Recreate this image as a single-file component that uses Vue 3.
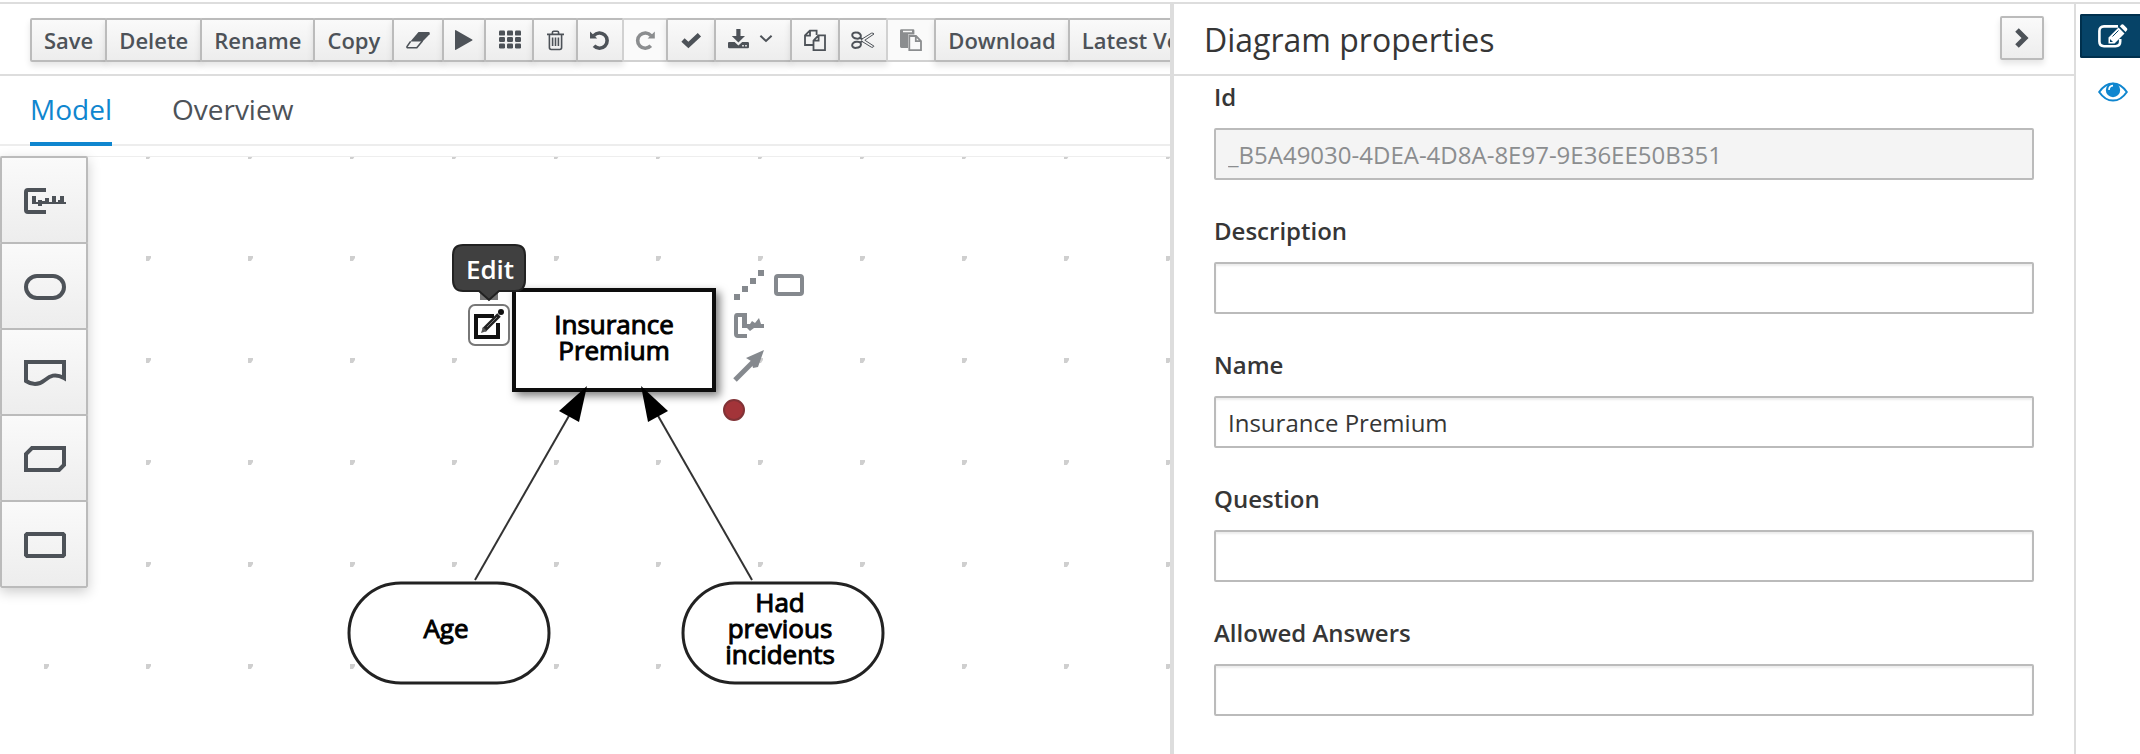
<script setup>
import { ref } from 'vue'

const tools = [
  { label: 'Save' },
  { label: 'Delete' },
  { label: 'Rename' },
  { label: 'Copy' },
  { name: 'Clear', width: 24, solid: 'M12.5 4H22.8Q24.6 4.3 23.6 6.2L16.6 13.6H4.4Z', line: 'M4.6 13.4L1 18.6Q.6 19.8 2 19.8H10.8L16.4 13', weight: 1.6 },
  { name: 'Run', width: 16, solid: 'M-1 2.6Q-.8 1.8 0 2.3L16.2 11.4Q17 12 16.2 12.6L0 21.7Q-.8 22.2 -1 21.4Z' },
  { name: 'Grid', width: 22, cells: true },
  { name: 'Remove', width: 18, line: 'M1 6.4H18M6.4 6V4.6Q6.4 3.2 7.8 3.2H11.2Q12.6 3.2 12.6 4.6V6M3.4 7V19.6Q3.4 21.5 5.2 21.5H13.8Q15.6 21.5 15.6 19.6V7M6.6 9.6V18M9.5 9.6V18M12.4 9.6V18', weight: 1.6 },
  { name: 'Undo', width: 20, solid: 'M0 3.4V10.6H7.2Z', line: 'M3.8 7.6A7.6 7.6 0 1 1 4 17.8', weight: 3.6 },
  { name: 'Redo', width: 18, disabled: true, solid: 'M18.8 3.4V10.6H11.6Z', line: 'M15 7.6A7.6 7.6 0 1 0 14.8 17.8', weight: 3.6 },
  { name: 'Validate', width: 22, line: 'M3 12L8.4 17L19.4 6.8', weight: 4.8 },
  { name: 'Export', width: 50, solid: 'M8.3 1H12.5V8H17L10.4 14.6L3.8 8H8.3ZM1 14H6.6L10.4 17.6L14.2 14H19.8Q21 14 21 15.2V19Q21 20.2 19.8 20.2H1.2Q0 20.2 0 19V15.2Q0 14 1 14ZM14.2 17V18.6H15.8V17ZM17.2 17V18.6H18.8V17Z', line: 'M32.4 7.8L38 13L43.6 7.8', weight: 2 },
  { name: 'Copy selection', width: 22, line: 'M8.6 17H1V7.4L5.8 2.6H12.6V7M6 2.8V7.6H1M9.5 12.6L14.4 7.4H21V22.2H9.5ZM14.6 7.6V12.6H9.6', weight: 1.8 },
  { name: 'Cut selection', width: 22, line: 'M4.6 4.6A3.8 3 15 1 1 4.5 10.6A3.8 3 15 1 1 4.6 4.6ZM4.6 13.8A3.8 3 -15 1 1 4.5 19.8A3.8 3 -15 1 1 4.6 13.8ZM7.6 9.4L10.4 11.4M7.6 15L10.4 13', weight: 2, thin: 'M10 11L19.4 5.2Q21.4 4.7 22 6L12.8 12.2L22 18.2Q21.4 19.7 19.4 19.2L10 13.4' },
  { name: 'Paste selection', width: 22, disabled: true, solid: 'M1.4 1.3H13.2Q14.4 1.3 14.4 2.6V6.6H8V20H1.4Q0 20 0 18.6V2.6Q0 1.3 1.4 1.3ZM3 2.8V4.2H12V2.8Z', line: 'M9.3 8H16L21 13V22.2H9.3ZM15.8 8.2V13.2H21', weight: 1.8 },
  { label: 'Download' },
  { label: 'Latest Version' },
]

const shapes = [
  { name: 'Text annotation', line: 'M22 2H4Q2 2 2 4V22Q2 24 4 24H22', solid: 'M8 8H12V14H14V12H18V13H21V10H25V14H28V8H32V14H34V12H36V8H40V14H42V16H18V18H14V16H8Z' },
  { name: 'Input data', line: 'M13 2H29A11 11 0 0 1 29 24H13A11 11 0 0 1 13 2Z' },
  { name: 'Knowledge source', line: 'M2 2H40V18C31 13 26 16 21 20C15 25 8 25 2 21Z' },
  { name: 'Business knowledge model', line: 'M8 2H40V19L35 24H2V8Z' },
  { name: 'Decision', line: 'M3 2H39L40 3V23L39 24H3L2 23V3Z' },
]

const fields = ref([
  { id: 'node-id', label: 'Id', value: '_B5A49030-4DEA-4D8A-8E97-9E36EE50B351', disabled: true },
  { id: 'description', label: 'Description', value: '' },
  { id: 'name', label: 'Name', value: 'Insurance Premium' },
  { id: 'question', label: 'Question', value: '' },
  { id: 'answers', label: 'Allowed Answers', value: '' },
])
</script>

<template>
  <div class="page">
    <main class="editor">
      <header class="bar toolbar">
        <button v-for="t in tools" :key="t.label || t.name" type="button" class="btn tool" :disabled="t.disabled" :aria-label="t.name">
          <template v-if="t.label">{{ t.label }}</template>
          <svg v-else class="icon" :width="t.width" height="24" aria-hidden="true">
            <g v-if="t.cells" fill="currentColor">
              <template v-for="row in 3" :key="row">
                <rect v-for="col in 3" :key="col" :x="col * 8 - 7" :y="row * 6.4 - 3.8" width="6" height="5" rx="1.2" />
              </template>
            </g>
            <path v-if="t.solid" :d="t.solid" fill="currentColor" fill-rule="evenodd" />
            <path v-if="t.line" :d="t.line" fill="none" stroke="currentColor" :stroke-width="t.weight" />
            <path v-if="t.thin" :d="t.thin" fill="none" stroke="currentColor" stroke-width="1" />
          </svg>
        </button>
      </header>

      <nav class="tabs">
        <a href="#model" class="tab active">Model</a>
        <a href="#overview" class="tab">Overview</a>
      </nav>

      <section class="canvas">
        <svg class="diagram" width="100%" height="100%" role="img" aria-label="Decision diagram">
          <defs>
            <pattern id="dots" x="44" y="-3" width="102" height="102" patternUnits="userSpaceOnUse">
              <path d="M0 1H5V3L3 6H0Z" fill="#cfcfcf" />
            </pattern>
            <filter id="shade" x="-10%" y="-10%" width="125%" height="130%">
              <feDropShadow dx="4" dy="4" stdDeviation="4" flood-color="#000" flood-opacity="0.5" />
            </filter>
          </defs>
          <rect width="100%" height="100%" fill="url(#dots)" />
          <rect width="100%" height="1" fill="#eee" />

          <rect x="514" y="134" width="200" height="100" fill="#fff" stroke="#111" stroke-width="4" filter="url(#shade)" />
          <g fill="#fff" stroke="#222" stroke-width="3">
            <rect x="349" y="427" width="200" height="100" rx="52" ry="50" />
            <rect x="683" y="427" width="200" height="100" rx="52" ry="50" />
          </g>

          <g stroke="#333" stroke-width="2">
            <path d="M475 424L570 258" />
            <path d="M752 424L657 258" />
          </g>
          <path d="M587 230L559 255L579 266Z" />
          <path d="M641 230L668 255L648 266Z" />

          <g class="node-text">
            <text x="614" y="178">Insurance</text>
            <text x="614" y="204">Premium</text>
            <text x="446" y="482">Age</text>
            <text x="780" y="456">Had</text>
            <text x="780" y="482">previous</text>
            <text x="780" y="508">incidents</text>
          </g>

          <rect x="480" y="134" width="18" height="10" fill="#777" />
          <path d="M463 89H515Q525 89 525 99V124Q525 135 515 135H499L489 144L479 135H463Q453 135 453 124V99Q453 89 463 89Z" fill="#404040" stroke="#222" stroke-width="2" />
          <text class="tip-text" x="490" y="123">Edit</text>

          <rect x="469" y="149" width="40" height="40" rx="6" fill="#fff" stroke="#777" stroke-width="2" />
          <path d="M494 160H476V181H498V167" fill="none" stroke="#111" stroke-width="4" />
          <path d="M484 174L499 159" stroke="#222" stroke-width="5" />
          <path d="M481 177L483 171L487 175Z" fill="#555" />
          <path d="M487 171L497 161" stroke="#777" stroke-width="1" />
          <circle cx="501" cy="156" r="3" fill="#111" />

          <g fill="#85898e">
            <path d="M734 138H740V144H734ZM742 130H748V136H742ZM750 122H756V128H750ZM758 114H764V120H758Z" />
            <path d="M742 161H747V168H750L752 165L755 167L759 162L761 168H764V172H754L750 175L747 172H742Z" />
            <path d="M764 194L746 202L751 205L753 212L758 211Z" />
          </g>
          <g fill="none" stroke="#85898e" stroke-width="4">
            <rect x="776" y="120" width="26" height="18" rx="2" />
            <path d="M747 159H737Q736 159 736 161V178Q736 180 738 180H747" />
            <path d="M735 224L755 204" stroke-width="5" />
          </g>
          <circle cx="734" cy="254" r="10" fill="#a33439" stroke="#813236" stroke-width="2" />
        </svg>

        <div class="palette">
          <button v-for="s in shapes" :key="s.name" type="button" class="btn shape" :aria-label="s.name">
            <svg class="icon" width="42" height="26" aria-hidden="true">
              <path :d="s.line" fill="none" stroke="currentColor" stroke-width="4" />
              <path v-if="s.solid" :d="s.solid" fill="currentColor" />
            </svg>
          </button>
        </div>
      </section>
    </main>

    <aside class="properties">
      <header class="bar heading">
        <h1>Diagram properties</h1>
        <button type="button" class="btn collapse" aria-label="Collapse panel">
          <svg class="icon" width="14" height="20" aria-hidden="true">
            <path d="M2 2L10 10L2 18" fill="none" stroke="currentColor" stroke-width="5" />
          </svg>
        </button>
      </header>
      <form class="form" @submit.prevent>
        <div v-for="f in fields" :key="f.id" class="field">
          <label :for="f.id">{{ f.label }}</label>
          <input :id="f.id" v-model="f.value" type="text" :disabled="f.disabled" />
        </div>
      </form>
    </aside>

    <nav class="rail">
      <button type="button" class="rail-btn on" aria-label="Properties">
        <svg class="icon" width="30" height="24" aria-hidden="true">
          <path d="M20 2.4H6Q1.4 2.4 1.4 7V17.6Q1.4 22.2 6 22.2H17.6Q22.2 22.2 22.2 17.6V15" fill="none" stroke="currentColor" stroke-width="2.6" />
          <path d="M10.5 13.5L20.5 3.5L26.5 9.5L16.5 19.5H10.5ZM21.8 2.2L23.6 .6Q24.6 0 25.6 .8L29 4.2Q29.8 5.2 29 6.2L27.6 8Z" fill="currentColor" />
          <path d="M14.5 12.5L20.5 6.5" stroke="#064367" stroke-width="1" />
          <path d="M12 15V18H15Z" fill="#064367" />
        </svg>
      </button>
      <button type="button" class="rail-btn" aria-label="Preview">
        <svg class="icon" width="30" height="20" aria-hidden="true">
          <path d="M1.2 10Q7 1.4 15 1.4T28.8 10Q23 18.6 15 18.6T1.2 10Z" fill="none" stroke="currentColor" stroke-width="2" />
          <circle cx="15" cy="8" r="7.2" fill="currentColor" />
          <path d="M11 8Q11 4 15 3.6" fill="none" stroke="#fff" stroke-width="1.6" />
        </svg>
      </button>
    </nav>
  </div>
</template>

<style>
body {
  margin: 0;
  background: #fff;
}
</style>

<style scoped>
.page {
  box-sizing: border-box;
  display: grid;
  grid-template-columns: minmax(0, 1170fr) minmax(0, 904fr) 66px;
  min-height: 100vh;
  padding-top: 2px;
  font-family: "Open Sans", "Noto Sans", sans-serif;
  font-size: 24px;
  color: #363636;
}
.page * {
  box-sizing: border-box;
}
.editor,
.properties,
.rail {
  border-top: 2px solid #ddd;
}
.editor {
  display: flex;
  flex-direction: column;
  overflow: hidden;
}
.bar {
  display: flex;
  align-items: center;
  height: 72px;
  padding-top: 2px;
  border-bottom: 2px solid #ddd;
}
.toolbar {
  flex: none;
  padding-left: 30px;
}
.btn {
  display: flex;
  flex: none;
  align-items: center;
  justify-content: center;
  margin: 0;
  border: 2px solid #bbb;
  border-radius: 2px;
  background: linear-gradient(#fafafa, #ededed);
  box-shadow: 0 4px 6px rgba(3, 3, 3, 0.1);
  color: #4d5258;
  font: 600 22px/36px "Open Sans", "Noto Sans", sans-serif;
  white-space: nowrap;
}
.tool {
  height: 44px;
  padding: 0 12px;
}
.tool + .tool {
  margin-left: -2px;
}
.tool:disabled {
  border-color: #d1d1d1;
  background: #fafafa;
  box-shadow: none;
  color: #8b8d8f;
}
.icon {
  display: block;
  overflow: visible;
}
.tabs {
  display: flex;
  flex: none;
  gap: 60px;
  height: 70px;
  padding-left: 30px;
  border-bottom: 2px solid #ededed;
}
.tab {
  height: 70px;
  border-bottom: 4px solid transparent;
  color: #4d5258;
  font-size: 28px;
  line-height: 66px;
  text-decoration: none;
}
.tab.active {
  border-bottom-color: #0f86cf;
  color: #0f86cf;
}
.canvas {
  position: relative;
  flex: 1;
  min-height: 440px;
  margin-top: 10px;
}
.diagram {
  position: absolute;
  inset: 0;
}
.node-text {
  fill: #000;
  stroke: #000;
  stroke-width: 1px;
  font-size: 26px;
  text-anchor: middle;
}
.tip-text {
  fill: #fff;
  font-size: 26px;
  font-weight: 600;
  text-anchor: middle;
}
.palette {
  position: absolute;
  top: 0;
  left: 0;
  box-shadow: 0 4px 12px rgba(3, 3, 3, 0.2);
}
.shape {
  width: 88px;
  height: 88px;
  padding: 2px 0 0 2px;
  box-shadow: none;
}
.shape + .shape {
  margin-top: -2px;
}
.properties {
  border-left: 4px solid #ddd;
}
.heading {
  justify-content: space-between;
  padding-right: 30px;
  padding-left: 30px;
}
h1 {
  margin: 0;
  font-size: 32px;
  font-weight: 400;
  line-height: 44px;
}
.collapse {
  width: 44px;
  height: 44px;
  margin-bottom: 4px;
  padding: 0;
}
.form {
  padding: 4px 40px 0;
}
.field {
  margin-bottom: 34px;
}
.field:last-child {
  margin-bottom: 0;
}
.field label {
  display: block;
  margin-bottom: 14px;
  font-weight: 600;
  line-height: 34px;
}
.field input {
  display: block;
  width: 100%;
  height: 52px;
  padding: 0 12px;
  border: 2px solid #bbb;
  border-radius: 2px;
  background: #fff;
  box-shadow: inset 0 2px 2px rgba(3, 3, 3, 0.075);
  color: #363636;
  font: 400 24px/36px "Open Sans", "Noto Sans", sans-serif;
}
.field input:disabled {
  background: #f4f4f4;
  box-shadow: none;
  color: #8b8d8f;
}
.rail {
  display: flex;
  flex-direction: column;
  gap: 12px;
  padding: 10px 0 0 4px;
  border-left: 2px solid #ddd;
}
.rail-btn {
  display: flex;
  align-items: center;
  height: 44px;
  margin: 0;
  padding: 0 0 0 16px;
  border: 2px solid transparent;
  border-right: 0;
  border-radius: 2px 0 0 2px;
  background: none;
  color: #0f86cf;
}
.rail-btn.on {
  border-color: #00304d;
  background: #064367;
  color: #fff;
}
</style>
